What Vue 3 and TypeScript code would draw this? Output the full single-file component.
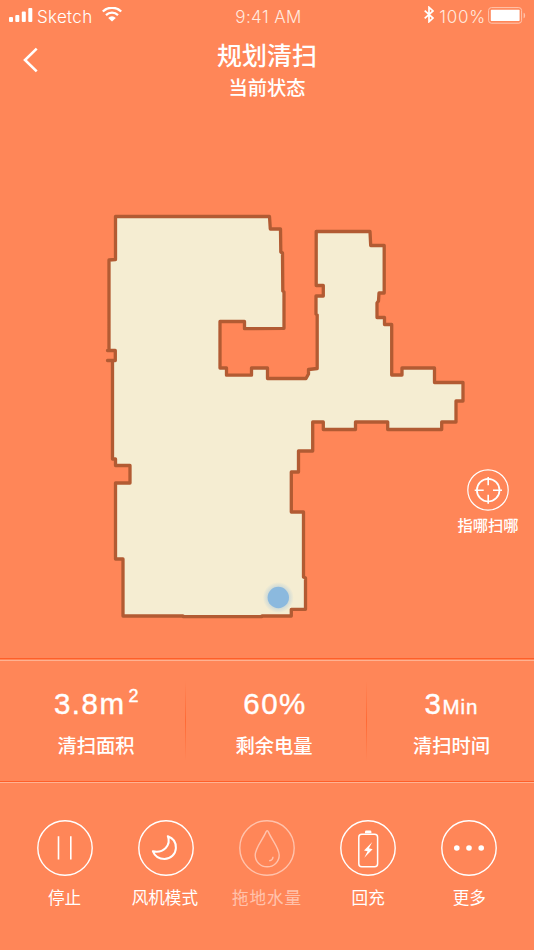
<script setup lang="ts">
type IconName = 'pause' | 'moon' | 'drop' | 'battery' | 'more'

interface Action {
  label: string
  icon: IconName
  disabled?: boolean
}

interface Stat {
  value: string
  unit: string
  kind: 'sup' | 'same' | 'small'
  label: string
}

const stats: Stat[] = [
  { value: '3.8m', unit: '2', kind: 'sup', label: '清扫面积' },
  { value: '60', unit: '%', kind: 'same', label: '剩余电量' },
  { value: '3', unit: 'Min', kind: 'small', label: '清扫时间' },
]

const actions: Action[] = [
  { label: '停止', icon: 'pause' },
  { label: '风机模式', icon: 'moon' },
  { label: '拖地水量', icon: 'drop', disabled: true },
  { label: '回充', icon: 'battery' },
  { label: '更多', icon: 'more' },
]

// Room outline, one wall segment per pair of points
const outline = [
  '115.5,216.5 269.5,216.5 270.3,229 280.5,229 280.8,252 282.5,253 282.8,291 284,292 284,328.3',
  '244.5,328.7 244.5,321.5 220,321.5 220,368 226.5,368 226.5,375.2 251.5,375.2 251.5,368',
  '267.5,368 267.5,378.5 306,378.5 308.5,374 308.5,369.5 317.2,368.5 317.2,315 316,314',
  '316,296 323.3,296 323.3,285.5 316.2,285.5 316.2,231.5 370,231.5 370.7,245.5 384.2,245.5',
  '384.2,293 379,293 378.5,301 377,303 377,317.5 384.5,317.5 384.5,324.5 391.7,324.5',
  '391.7,375 402,375 402,368 434.5,368 434.5,382.5 463,382.5 463,401 456,401 456,422',
  '441.7,422 441.7,429.5 387.7,429.5 387.7,422 355.5,422 355.5,429.5 323.3,429.5 323.3,422',
  '312.7,422 312.7,451 298.5,451 298.5,472 291.3,472 291.3,512 303.5,512 303.5,577',
  '305.5,578 305.5,609.3 291.3,609.3 291.3,616 262,616 262,616.6 183,616.6 183,616',
  '123,616 123,559 115.5,559 115.5,483 130,483 130,465.5 115.5,465.5 115.5,459',
  '112.5,459 112.5,360.5 107.5,360.5 115.3,360.5 115.3,350.5 107.5,350.5 109,350.5 109,260 115.5,259.5',
].join(' ')
</script>

<template>
  <main class="screen">
    <div class="status">
      <div class="side">
        <svg class="signal" width="24" height="16" viewBox="0 0 24 16">
          <rect x="0" y="10" width="4" height="5" rx="1" />
          <rect x="6.3" y="8" width="4" height="7" rx="1" />
          <rect x="12.8" y="4.5" width="4" height="10.5" rx="1" />
          <rect x="19.3" y="1" width="4" height="14" rx="1" />
        </svg>
        <span class="carrier">Sketch</span>
        <svg class="wifi" width="20" height="15" viewBox="0 0 20 15">
          <path d="M.8 4.5a13.2 13.2 0 0 1 18.4 0M4 8.1a8.7 8.7 0 0 1 12 0" />
          <path class="solid" d="M6.2 10.9a5.4 5.4 0 0 1 7.6 0L10 14.6Z" />
        </svg>
      </div>
      <span class="clock">9:41 AM</span>
      <div class="side right">
        <svg class="bluetooth" width="10" height="17" viewBox="0 0 10 17">
          <path d="M.7 4.7 9 12 5 15.7V1.3L9 5 .7 12.3" />
        </svg>
        <span class="percent">100%</span>
        <svg class="cell" width="38" height="17" viewBox="0 0 38 17">
          <rect x=".6" y=".6" width="33" height="15.6" rx="2.8" />
          <path d="M35.6 5.7c2 .5 2 5 0 5.6Z" />
          <rect class="charge" x="2.8" y="2.8" width="28.8" height="11.2" rx=".7" />
        </svg>
      </div>
    </div>

    <header class="heading">
      <svg class="back" width="16" height="26" viewBox="0 0 16 26">
        <path d="M13.7 1.6 2 13l11.7 11.4" />
      </svg>
      <div class="titles">
        <h1>规划清扫</h1>
        <p>当前状态</p>
      </div>
    </header>

    <section class="map">
      <svg class="plan" width="534" height="558" viewBox="0 100 534 558">
        <defs>
          <radialGradient id="halo">
            <stop offset=".6" stop-color="#8bb9df" stop-opacity=".45" />
            <stop offset="1" stop-color="#8bb9df" stop-opacity="0" />
          </radialGradient>
        </defs>
        <polygon :points="outline" />
        <circle class="halo" cx="278.3" cy="597.5" r="15.5" />
        <circle class="robot" cx="278.3" cy="597.5" r="10.7" />
      </svg>
      <div class="target">
        <svg width="42" height="42" viewBox="0 0 42 42">
          <circle cx="21" cy="21" r="20.2" stroke-width="1.2" />
          <circle cx="21.2" cy="21.2" r="11.3" stroke-width="1.7" />
          <path d="M21.2 8v8.3M21.2 25.8v9M7.7 21.2h9M26 21.2h9" stroke-width="1.6" />
        </svg>
        <span>指哪扫哪</span>
      </div>
    </section>

    <section class="stats">
      <div v-for="s in stats" :key="s.label" class="stat">
        <div class="figure">{{ s.value }}<span :class="s.kind">{{ s.unit }}</span></div>
        <div class="caption">{{ s.label }}</div>
      </div>
    </section>

    <nav class="actions">
      <div v-for="a in actions" :key="a.label" class="action" :class="{ disabled: a.disabled }">
        <svg width="56" height="56" viewBox="0 0 56 56">
          <circle cx="28" cy="28" r="27.2" />
          <path v-if="a.icon === 'pause'" d="M21.5 16.3v23.2M33.8 16.3v23.2" stroke-width="1.6" />
          <path
            v-else-if="a.icon === 'moon'"
            d="M29.8 16.2C35.1 18 38.1 22.3 37.9 28C37.7 34.2 32.7 38.9 26.5 38.9C21 38.9 16.8 36 14.9 31.3C19.8 32.5 24.4 31.3 27.7 28C30.8 24.7 31.4 20.2 29.8 16.2Z"
            stroke-width="2"
            stroke-linejoin="round"
          />
          <template v-else-if="a.icon === 'drop'">
            <path d="M28.2 10.8C27.6 10.8 27.2 11.5 26.8 12.4C23.5 20 16.2 28 16.2 35.2A12 11.6 0 0 0 40.2 35.2C40.2 28 32.9 20 29.6 12.4C29.2 11.5 28.8 10.8 28.2 10.8Z" />
            <path d="M34 36.7c-.1 2.2-1.5 3.8-3.8 4.1" />
          </template>
          <template v-else-if="a.icon === 'battery'">
            <rect x="18.8" y="14.3" width="18.8" height="32.4" rx="3" stroke-width="1.5" />
            <path class="solid" d="M25 13.2v-1.4q0-1.3 1.3-1.3h3.8q1.3 0 1.3 1.3v1.4Z" />
            <path class="solid" d="M32.3 22 24 30.4l3.6.8-3.3 6.5 8.3-8.5-3.7-.9Z" />
          </template>
          <template v-else>
            <circle class="solid" cx="15.8" cy="28" r="2.8" />
            <circle class="solid" cx="28" cy="28" r="2.8" />
            <circle class="solid" cx="40.2" cy="28" r="2.8" />
          </template>
        </svg>
        <span>{{ a.label }}</span>
      </div>
    </nav>
  </main>
</template>

<style>
body {
  background: #ff8658;
}
</style>

<style scoped>
.screen {
  width: 534px;
  height: 950px;
  overflow: hidden;
  box-sizing: border-box;
  display: flex;
  flex-direction: column;
  background: #ff8658;
  color: #fff;
  font-family: Inter, 'Noto Sans CJK SC', sans-serif;
}

svg {
  display: block;
  flex: none;
  fill: none;
  stroke: #fff;
}

.status {
  height: 34px;
  flex: none;
  display: grid;
  grid-template-columns: 1fr auto 1fr;
  align-items: start;
  padding: 0 9px;
  font-size: 17px;
  line-height: 34px;
  font-weight: 300;
}

.side {
  display: flex;
  align-items: center;
  height: 30px;
}

.right {
  justify-content: flex-end;
}

.signal {
  fill: #fff;
  stroke: none;
}

.carrier {
  margin: 3px 0 0 4px;
  letter-spacing: 0.3px;
}

.clock {
  color: #ffe9df;
  letter-spacing: 0.4px;
  padding-left: 3px;
}

.wifi {
  margin-left: 10px;
  margin-bottom: 2px;
  stroke-width: 2.3;
}

.bluetooth {
  stroke-width: 1.7;
  margin-bottom: 2px;
}

.percent {
  margin: 3px 2px 0 5px;
  letter-spacing: 0.8px;
  color: #ffe9df;
}

.cell {
  margin-right: -1px;
  stroke: #ffc5ae;
}

.cell path {
  fill: #ffc5ae;
  stroke: none;
}

.cell .charge {
  fill: #fff;
  stroke: none;
}

.solid {
  fill: #fff;
  stroke: none;
}

.heading {
  height: 66px;
  flex: none;
  display: grid;
  grid-template-columns: 60px 1fr 60px;
}

.back {
  margin: 13px 0 0 23px;
  stroke-width: 2.6;
}

.titles {
  text-align: center;
}

h1 {
  margin: 5px 0 0;
  font-size: 25px;
  line-height: 34px;
  font-weight: 500;
}

.titles p {
  margin: 2px 0 0;
  font-size: 19.3px;
  line-height: 26px;
  font-weight: 500;
}

.map {
  position: relative;
  height: 558px;
  flex: none;
}

.plan polygon {
  fill: #f5edd2;
  stroke: #b25b33;
  stroke-width: 3.3;
  stroke-linejoin: round;
}

.halo {
  fill: url(#halo);
  stroke: none;
}

.robot {
  fill: #8bb9de;
  stroke: none;
}

.target {
  position: absolute;
  top: 369px;
  left: 448px;
  width: 80px;
  display: flex;
  flex-direction: column;
  align-items: center;
  font-size: 15.3px;
  line-height: 24px;
  font-weight: 500;
}

.target span {
  margin-top: 3px;
}

.stats {
  box-sizing: border-box;
  height: 125px;
  flex: none;
  display: grid;
  grid-template-columns: 185px 181px 168px;
  border-top: 1px solid #fe5f29;
  border-bottom: 1px solid #ffb292;
  background:
    linear-gradient(#ffb292, #ffb292) 0 1px / 100% 1px no-repeat,
    linear-gradient(#fe5f29, #fe5f29) 0 100% / 100% 1px no-repeat;
}

.stat {
  text-align: center;
  position: relative;
  padding-top: 25px;
}

.stat:first-child {
  padding-left: 7px;
}

.stat:nth-child(2) {
  padding-right: 3px;
}

.stat:last-child {
  padding-left: 3px;
}

.stat:not(:last-child)::after {
  content: '';
  position: absolute;
  right: -1px;
  top: 22px;
  width: 1px;
  height: 80px;
  background: linear-gradient(transparent, #ff6a35 50%, transparent);
}

.figure {
  height: 40px;
  padding-left: 2px;
  font-family: 'Liberation Sans', Arial, sans-serif;
  font-size: 29.5px;
  line-height: 40px;
  letter-spacing: 1.5px;
  white-space: nowrap;
  -webkit-text-stroke: 0.4px #fff;
}

.stat:last-child .figure {
  padding-left: 0;
}

.sup {
  font-size: 18px;
  position: relative;
  top: -12px;
  margin-left: 3px;
}

.small {
  font-size: 20.5px;
  letter-spacing: 1px;
}

.caption {
  margin-top: 8px;
  font-size: 19.3px;
  line-height: 28px;
  font-weight: 500;
}

.actions {
  display: grid;
  grid-template-columns: repeat(5, 101.2px);
  justify-content: center;
  padding-top: 37px;
}

.action {
  display: flex;
  flex-direction: column;
  align-items: center;
  font-size: 16.6px;
  line-height: 26px;
}

.action svg {
  stroke-width: 1.4;
}

.action span {
  margin-top: 9px;
}

.action:nth-child(2) span {
  margin-right: 2px;
}

.disabled {
  opacity: 0.5;
}

.disabled span {
  letter-spacing: 0.9px;
}
</style>
